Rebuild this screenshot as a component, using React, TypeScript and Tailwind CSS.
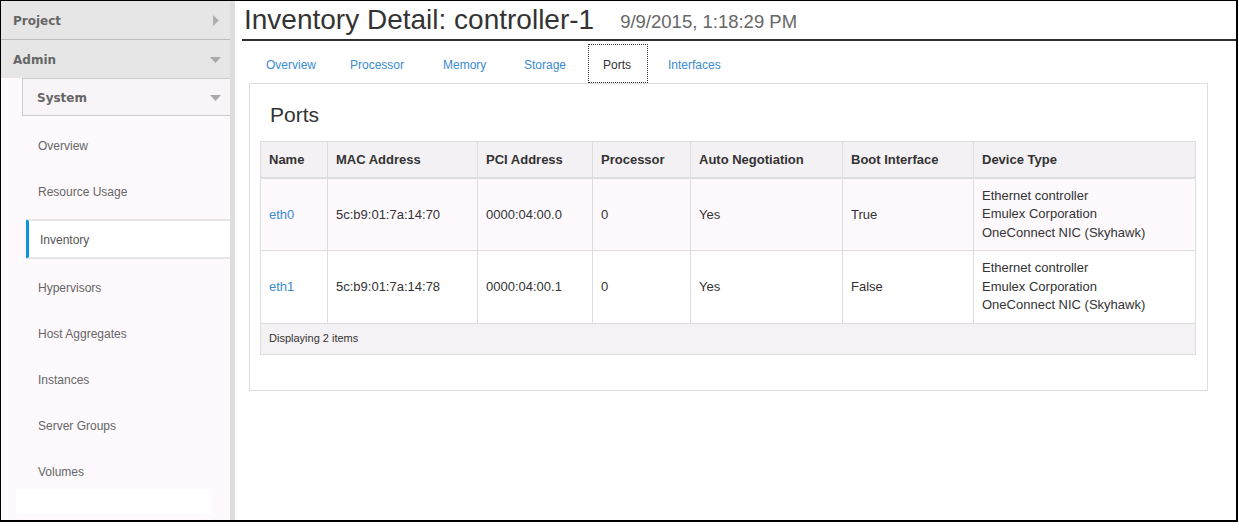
import React from "react";

const navItems = [
  "Overview",
  "Resource Usage",
  "Inventory",
  "Hypervisors",
  "Host Aggregates",
  "Instances",
  "Server Groups",
  "Volumes",
];

const rows = [
  {
    name: "eth0",
    mac: "5c:b9:01:7a:14:70",
    pci: "0000:04:00.0",
    proc: "0",
    auto: "Yes",
    boot: "True",
    odd: true,
  },
  {
    name: "eth1",
    mac: "5c:b9:01:7a:14:78",
    pci: "0000:04:00.1",
    proc: "0",
    auto: "Yes",
    boot: "False",
    odd: false,
  },
];

function DownTri() {
  return (
    <svg width="11" height="6" viewBox="0 0 11 6" className="block">
      <polygon points="0,0 11,0 5.5,6" fill="#a9a9a9" />
    </svg>
  );
}

function RightTri() {
  return (
    <svg width="6" height="11" viewBox="0 0 6 11" className="block">
      <polygon points="0,0 6,5.5 0,11" fill="#b0b0b0" />
    </svg>
  );
}

export default function App() {
  return (
    <div className="w-[1239px] h-[531px] bg-white">
      <div className="w-[1238px] h-[522px] border-t border-l border-r-2 border-b-2 border-black flex overflow-hidden font-['Liberation_Sans',Arial,sans-serif]">
        {/* Sidebar */}
        <div className="w-[229px] shrink-0 bg-[#fdf9fd] flex flex-col">
          <div className="h-[39px] bg-[#e6e6e6] border-b border-[#bdbdbd] flex items-center justify-between pl-[12px] pr-[11px] pt-[1px]">
            <span className="font-['DejaVu_Sans',sans-serif] font-bold text-[12px] text-[#666666]">Project</span>
            <RightTri />
          </div>
          <div className="h-[38px] bg-[#e6e6e6] flex items-center justify-between pl-[12px] pr-[9px] pt-[1px]">
            <span className="font-['DejaVu_Sans',sans-serif] font-bold text-[12px] text-[#666666]">Admin</span>
            <DownTri />
          </div>
          <div className="ml-[21px] h-[38px] bg-[#f8f4f8] border-l border-t border-b border-[#cccccc] flex items-center justify-between pl-[14px] pr-[9px] pt-[1px]">
            <span className="font-['DejaVu_Sans',sans-serif] font-bold text-[12px] text-[#666666]">System</span>
            <DownTri />
          </div>
          <div className="mt-[7px] flex flex-col">
            {navItems.map((item) =>
              item === "Inventory" ? (
                <div
                  key={item}
                  className="ml-[25px] mt-[4px] mb-[6px] h-[40px] bg-white border-y-2 border-[#e6e6e6] border-l-[3px] border-l-[#0a93d8] rounded-l-[2px] flex items-center pl-[11px] pt-[1px] text-[12px] text-[#555555]"
                >
                  {item}
                </div>
              ) : (
                <div key={item} className="h-[46px] flex items-center pl-[37px] text-[12px] text-[#666666]">
                  {item}
                </div>
              )
            )}
            <div className="-mt-[6px] ml-[15px] w-[195px] h-[25px] bg-white" />
          </div>
        </div>
        <div className="w-[5px] shrink-0 bg-[#dddddd]" />
        {/* Main */}
        <div className="flex-1 bg-white pl-[7px]">
          <div className="h-[38px] flex items-end pl-[2px] pb-[3px] gap-[26px]">
            <span className="text-[28px] leading-[32px] text-[#333333]">Inventory Detail: controller-1</span>
            <span className="text-[18.5px] leading-[24px] text-[#666666] pb-[2px]">9/9/2015, 1:18:29 PM</span>
          </div>
          <div className="h-[2px] bg-[#2f2f2f]" />
          <div className="mt-[3px] ml-[8px] flex h-[39px] text-[12px]">
            <div className="w-[84px] h-[39px] pl-[16px] pt-[2px] flex items-center text-[#3a8bd0]">Overview</div>
            <div className="w-[93px] h-[39px] pl-[16px] pt-[2px] flex items-center text-[#3a8bd0]">Processor</div>
            <div className="w-[81px] h-[39px] pl-[16px] pt-[2px] flex items-center text-[#3a8bd0]">Memory</div>
            <div className="w-[80px] h-[39px] pl-[16px] pt-[2px] flex items-center text-[#3a8bd0]">Storage</div>
            <div className="w-[60px] h-[39px] pl-[14px] pt-[2px] flex items-center border border-dotted border-[#333333] text-[#333333]">
              Ports
            </div>
            <div className="h-[39px] pl-[20px] pt-[2px] flex items-center text-[#3a8bd0]">Interfaces</div>
          </div>
          <div className="ml-[7px] w-[959px] h-[308px] border border-[#dddddd] px-[10px]">
            <div className="h-[57px] flex items-center pl-[10px] pt-[4px] text-[21px] text-[#333333]">Ports</div>
            <table className="w-[936px] border-collapse text-[13px] text-[#333333]">
              <colgroup>
                <col className="w-[67px]" />
                <col className="w-[150px]" />
                <col className="w-[115px]" />
                <col className="w-[98px]" />
                <col className="w-[152px]" />
                <col className="w-[131px]" />
                <col />
              </colgroup>
              <thead>
                <tr className="bg-[#f4f1f4] h-[36px]">
                  {["Name", "MAC Address", "PCI Address", "Processor", "Auto Negotiation", "Boot Interface", "Device Type"].map((h) => (
                    <th
                      key={h}
                      className="border border-[#dddddd] border-b-2 text-left font-bold px-[8px] py-0 pt-[1px] align-middle"
                    >
                      {h}
                    </th>
                  ))}
                </tr>
              </thead>
              <tbody>
                {rows.map((r) => (
                  <tr key={r.name} className={r.odd ? "bg-[#fdf9fd]" : "bg-white"}>
                    <td className="border border-[#dddddd] px-[8px] text-[#3a8bd0]">{r.name}</td>
                    <td className="border border-[#dddddd] px-[8px]">{r.mac}</td>
                    <td className="border border-[#dddddd] px-[8px]">{r.pci}</td>
                    <td className="border border-[#dddddd] px-[8px]">{r.proc}</td>
                    <td className="border border-[#dddddd] px-[8px]">{r.auto}</td>
                    <td className="border border-[#dddddd] px-[8px]">{r.boot}</td>
                    <td className="border border-[#dddddd] px-[8px] pt-[8px] pb-[8px] leading-[18.5px]">
                      <div>Ethernet controller</div>
                      <div>Emulex Corporation</div>
                      <div>OneConnect NIC (Skyhawk)</div>
                    </td>
                  </tr>
                ))}
                <tr className="bg-[#f5f2f5] h-[31px]">
                  <td colSpan={7} className="border border-[#dddddd] px-[8px] text-[11px] text-[#333333]">
                    Displaying 2 items
                  </td>
                </tr>
              </tbody>
            </table>
          </div>
        </div>
      </div>
    </div>
  );
}
